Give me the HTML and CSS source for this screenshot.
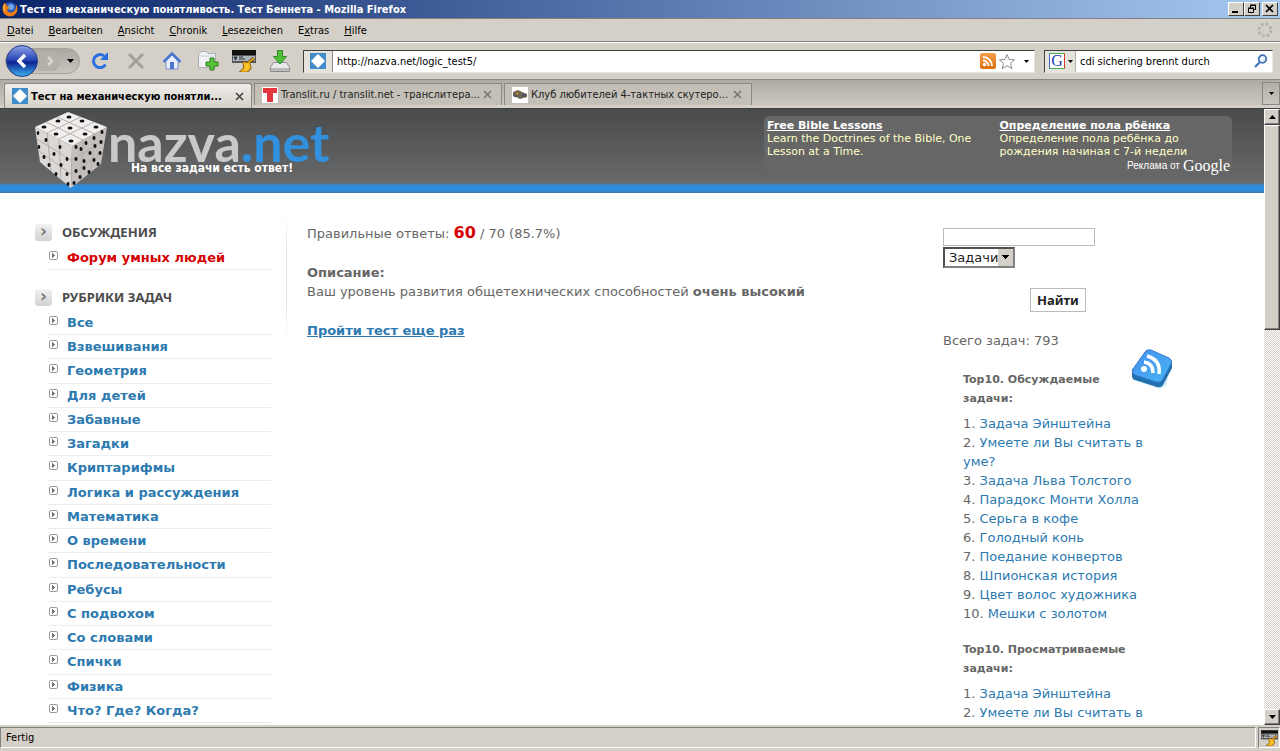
FILE: index.html
```html
<!DOCTYPE html>
<html lang="ru">
<head>
    <meta charset="UTF-8">
    <meta name="viewport" content="width=device-width, initial-scale=1.0">
    <title>Тест на механическую понятливость. Тест Беннета</title>
    <link rel="stylesheet" href="styles.css">
</head>
<body>
    <!-- shared icons -->
    <svg class="defs" width="0" height="0" aria-hidden="true">
        <defs>
            <linearGradient id="orb" x1="0" y1="0" x2="0" y2="1">
                <stop offset="0" stop-color="#8fa4e6"/>
                <stop offset=".45" stop-color="#2a48b8"/>
                <stop offset=".55" stop-color="#0c2590"/>
                <stop offset="1" stop-color="#3fb4f4"/>
            </linearGradient>
            <linearGradient id="rss-blue" x1="0" y1="0" x2="1" y2="1">
                <stop offset="0" stop-color="#4a8ff0"/>
                <stop offset="1" stop-color="#45b4f2"/>
            </linearGradient>
            <linearGradient id="feed-orange" x1="0" y1="0" x2="0" y2="1">
                <stop offset="0" stop-color="#f6a04a"/>
                <stop offset="1" stop-color="#dd6f10"/>
            </linearGradient>
        </defs>
        <symbol id="diamond" viewBox="0 0 16 16">
            <rect width="16" height="16" fill="#418bca"/>
            <path d="M8 1l7 7-7 7-7-7z" fill="#fff"/>
            <path d="M8 3l5 5-5 5-5-5z" fill="#fff" stroke="#fff" stroke-width="2" stroke-linejoin="round"/>
        </symbol>
        <symbol id="cross" viewBox="0 0 9 9">
            <path d="M1 1l7 7M8 1L1 8" stroke="currentColor" stroke-width="1.6"/>
        </symbol>
        <symbol id="key" viewBox="0 0 24 22">
            <path d="M0 0h24v5H0z" fill="#111"/>
            <path d="M0 5h24v8H0z" fill="#555"/>
            <path d="M1 6h22v5H1z" fill="#a9b4bd"/>
            <path d="M2 7h3l-1.500 3zM7 7h4M7 9h6" stroke="#333" fill="#333"/>
            <path d="M22 8l-7 6M12 13l5 1 1 4-3 3-5 0 3-3z" stroke="#6b4a00" stroke-width="3" fill="#6b4a00"/>
            <path d="M22 8l-7 6M12 13l5 1 1 4-3 3-5 0 3-3z" stroke="#f5b422" stroke-width="1.600" fill="#f9c62c"/>
        </symbol>
    </svg>

    <div class="window">
        <div class="titlebar">
            <svg width="16" height="16" viewBox="0 0 16 16">
                <circle cx="8" cy="8" r="7" fill="#2c55b5"/>
                <circle cx="9" cy="6" r="3" fill="#6fa8e8"/>
                <path d="M2 2C0 6 0 11 3 13.500c4 3.500 10 2 12-3 1-3 0-6-1-7 .5 4-1 7-4 8-3 .5-5-1-4.500-3.500L8 7 5 5 4 3z" fill="#ee7a12"/>
                <path d="M3 3c-1 3-1 6 1 8-2-1-3-3-3-5z" fill="#ffd24a"/>
            </svg>
            <span class="title-text">Тест на механическую понятливость. Тест Беннета - Mozilla Firefox</span>
            <div class="window-buttons">
                <button class="win-btn" aria-label="Minimieren"><svg width="10" height="10" viewBox="0 0 10 10"><path d="M1 8h6" stroke="#000" stroke-width="2"/></svg></button>
                <button class="win-btn" aria-label="Wiederherstellen"><svg width="10" height="10" viewBox="0 0 10 10"><path d="M3.500 4V1.500h5v4H7M3 1h6M1.500 4.500h5v4h-5zM1 4h6" fill="none" stroke="#000"/></svg></button>
                <button class="win-btn close" aria-label="Schließen"><svg width="10" height="10" viewBox="0 0 10 10"><path d="M1 1l7 7M8 1L1 8" stroke="#000" stroke-width="1.700"/></svg></button>
            </div>
        </div>

        <nav class="menubar">
            <button><u>D</u>atei</button>
            <button><u>B</u>earbeiten</button>
            <button><u>A</u>nsicht</button>
            <button><u>C</u>hronik</button>
            <button><u>L</u>esezeichen</button>
            <button>E<u>x</u>tras</button>
            <button><u>H</u>ilfe</button>
            <svg class="throbber" width="16" height="16" viewBox="0 0 16 16"><circle cx="8" cy="8" r="6" fill="none" stroke="#b5b3ae" stroke-width="3" stroke-dasharray="2.700 2"/></svg>
        </nav>

        <div class="toolbar">
            <div class="history">
                <button class="back" aria-label="Zurück">
                    <svg width="32" height="32" viewBox="0 0 32 32"><circle cx="16" cy="16" r="15.500" fill="url(#orb)" stroke="#253c8c"/><path d="M19 10l-6 6 6 6" fill="none" stroke="#fff" stroke-width="3.500"/></svg>
                </button>
                <button class="forward" aria-label="Vor">
                    <svg width="24" height="20" viewBox="0 0 24 20"><path d="M0 0h18l6 10-6 10H0z" fill="#b4b1ab"/><path d="M10 6l4 4-4 4" fill="none" stroke="#d8d5ce" stroke-width="2.500"/></svg>
                </button>
                <button class="drop" aria-label="Verlauf"><svg width="7" height="4" viewBox="0 0 7 4"><path d="M0 0h7L3.500 4z"/></svg></button>
            </div>
            <button class="tool" aria-label="Neu laden">
                <svg width="20" height="20" viewBox="0 0 20 20"><path d="M15.500 13.500A6.500 6.500 0 1 1 14 5" fill="none" stroke="#2a6fdf" stroke-width="3"/><path d="M18 1v8h-8z" fill="#2a6fdf"/></svg>
            </button>
            <button class="tool" aria-label="Stopp">
                <svg width="20" height="20" viewBox="0 0 20 20"><path d="M3 3l14 14M17 3L3 17" stroke="#a3a09a" stroke-width="3"/></svg>
            </button>
            <button class="tool" aria-label="Startseite">
                <svg width="20" height="20" viewBox="0 0 20 20"><path d="M4 10v8h12v-8l-6-6z" fill="#e8eefb" stroke="#7690c8"/><path d="M1.500 11L10 2.500l8.500 8.500" fill="none" stroke="#4a78cf" stroke-width="2.500"/><path d="M8 11h4v7H8z" fill="#4a78cf"/></svg>
            </button>
            <button class="tool" aria-label="Neuer Tab">
                <svg width="22" height="22" viewBox="0 0 22 22"><path d="M1.500 17.500V4.500L4 1.500h5l2 2h7.500v14z" fill="#f1f3f7" stroke="#a9adb5"/><path d="M2 6h16" stroke="#cdd2da"/><path d="M13 8h4v4h4v4h-4v4h-4v-4H9v-4h4z" fill="#5cc43c" stroke="#2b7d1c"/></svg>
            </button>
            <button class="tool" aria-label="Passwort"><svg width="24" height="22"><use href="#key"/></svg></button>
            <button class="tool" aria-label="Downloads">
                <svg width="20" height="22" viewBox="0 0 20 22"><path d="M3.500 12.500h13l3 5v4H.5v-4z" fill="#e9e9e9" stroke="#8b8b8b"/><path d="M1 18h18v3H1z" fill="#b9b9b9"/><path d="M7.500.5h5v6h4L10 14 3.500 6.500h4z" fill="#4fbf38" stroke="#2f8a22"/></svg>
            </button>
            <div class="field address">
                <span class="site-icon"><svg width="16" height="16"><use href="#diamond"/></svg></span>
                <input type="text" aria-label="Adresse" value="http://nazva.net/logic_test5/">
                <svg width="16" height="16" viewBox="0 0 16 16"><rect width="16" height="16" rx="2" fill="url(#feed-orange)"/><circle cx="4.500" cy="11.500" r="1.700" fill="#fff"/><path d="M3 7.500a5.500 5.500 0 0 1 5.500 5.500M3 4a9 9 0 0 1 9 9" fill="none" stroke="#fff" stroke-width="1.800"/></svg>
                <svg width="18" height="17" viewBox="0 0 18 17"><path d="M9 1.500l2.200 5 5.300.4-4 3.500 1.300 5.200L9 12.800l-4.800 2.800 1.300-5.200-4-3.500 5.300-.4z" fill="#fff" stroke="#8b8b8b"/></svg>
                <button class="field-drop" aria-label="Adressliste"><svg width="5" height="3" viewBox="0 0 5 3"><path d="M0 0h5L2.500 3z"/></svg></button>
            </div>
            <div class="field search">
                <button class="engine" aria-label="Suchmaschine">
                    <span class="engine-logo">G</span>
                    <svg width="5" height="3" viewBox="0 0 5 3"><path d="M0 0h5L2.500 3z"/></svg>
                </button>
                <input type="text" aria-label="Suche" value="cdi sichering brennt durch">
                <svg width="14" height="14" viewBox="0 0 14 14"><circle cx="8.500" cy="5" r="3.800" fill="#eaf2fb" stroke="#3f73b5" stroke-width="1.800"/><path d="M6 8l-5 5" stroke="#3f73b5" stroke-width="2.200"/></svg>
            </div>
        </div>

        <div class="tabs">
            <div class="tab active">
                <svg width="16" height="16"><use href="#diamond"/></svg>
                <span>Тест на механическую понятли...</span>
                <button aria-label="Tab schließen"><svg width="9" height="9"><use href="#cross"/></svg></button>
            </div>
            <div class="tab">
                <svg width="16" height="16" viewBox="0 0 16 16"><rect width="16" height="16" fill="#fff"/><path d="M1 1h14v5h-4v9H5V6H1z" fill="#e2373f"/></svg>
                <span>Translit.ru / translit.net - транслитера...</span>
                <button aria-label="Tab schließen"><svg width="9" height="9"><use href="#cross"/></svg></button>
            </div>
            <div class="tab">
                <svg width="16" height="16" viewBox="0 0 16 16"><rect width="16" height="16" fill="#fff"/><path d="M1 5l5-2 4 2 5 2v3l-4 1-3 1-4-2-3-1z" fill="#6e6250"/><path d="M4 5l3 1-2 2z" fill="#d49a2a"/><path d="M10 7l4 1-3 2zM2 8l3 2-3 0z" fill="#3c4a78"/></svg>
                <span>Клуб любителей 4-тактных скутеро...</span>
                <button aria-label="Tab schließen"><svg width="9" height="9"><use href="#cross"/></svg></button>
            </div>
            <button class="all-tabs" aria-label="Alle Tabs"><svg width="5" height="3" viewBox="0 0 5 3"><path d="M0 0h5L2.500 3z"/></svg></button>
        </div>

        <div class="viewport">
            <div class="page">
                <header class="header">
                    <svg class="cube" width="74" height="80" viewBox="0 0 74 80">
                        <path d="M1 16L34 1l39 15-35 19z" fill="#f1efed"/>
                        <path d="M1 16l37 19-1 42L6 51z" fill="#dcd8d6"/>
                        <path d="M73 16L38 35l-1 42 30-24z" fill="#c4bebc"/>
                        <path d="M12 11l37 18M23 6l38 17M13 22l34-16M25 28l35-17M3 28l34 21M5 40l32 23M13 22l4 38M25 29l2 40M71 29L38 49M69 41L37 63M61 23l-4 38M49 29l-2 40" stroke="#b5afad" fill="none"/>
                        <g class="pips">
                            <ellipse cx="35" cy="6" rx="2.500" ry="1.500"/><ellipse cx="24" cy="10" rx="2.500" ry="1.500"/><ellipse cx="48" cy="10" rx="2.500" ry="1.500"/>
                            <ellipse cx="10" cy="16" rx="2.500" ry="1.500"/><ellipse cx="36" cy="17" rx="2.500" ry="1.500"/><ellipse cx="62" cy="16" rx="2.500" ry="1.500"/>
                            <ellipse cx="22" cy="23" rx="2.500" ry="1.500"/><ellipse cx="51" cy="23" rx="2.500" ry="1.500"/><ellipse cx="37" cy="30" rx="2.500" ry="1.500"/>
                            <ellipse cx="4" cy="22" rx="1.300" ry="2"/><ellipse cx="12" cy="29" rx="1.500" ry="2"/><ellipse cx="26" cy="36" rx="1.500" ry="2"/><ellipse cx="33" cy="48" rx="1.500" ry="2"/>
                            <ellipse cx="5" cy="36" rx="1.300" ry="2"/><ellipse cx="20" cy="43" rx="1.500" ry="2"/><ellipse cx="10" cy="46" rx="1.500" ry="2"/><ellipse cx="15" cy="54" rx="1.500" ry="2"/>
                            <ellipse cx="27" cy="54" rx="1.500" ry="2"/><ellipse cx="22" cy="63" rx="1.500" ry="2"/><ellipse cx="33" cy="63" rx="1.500" ry="2"/><ellipse cx="34" cy="73" rx="1.500" ry="2"/>
                            <ellipse cx="42" cy="36" rx="1.500" ry="2"/><ellipse cx="42" cy="48" rx="1.500" ry="2"/><ellipse cx="47" cy="38" rx="1.500" ry="2"/><ellipse cx="52" cy="32" rx="1.500" ry="2"/>
                            <ellipse cx="60" cy="27" rx="1.500" ry="2"/><ellipse cx="68" cy="21" rx="1.500" ry="2"/><ellipse cx="67" cy="31" rx="1.500" ry="2"/><ellipse cx="61" cy="35" rx="1.500" ry="2"/>
                            <ellipse cx="56" cy="42" rx="1.500" ry="2"/><ellipse cx="66" cy="42" rx="1.500" ry="2"/><ellipse cx="50" cy="50" rx="1.500" ry="2"/><ellipse cx="60" cy="49" rx="1.500" ry="2"/>
                            <ellipse cx="42" cy="60" rx="1.500" ry="2"/><ellipse cx="50" cy="57" rx="1.500" ry="2"/><ellipse cx="64" cy="53" rx="1.500" ry="2"/><ellipse cx="46" cy="66" rx="1.500" ry="2"/><ellipse cx="55" cy="61" rx="1.500" ry="2"/><ellipse cx="40" cy="72" rx="1.500" ry="2"/>
                        </g>
                    </svg>
                    <div class="logo">
                        <div class="logo-name">nazva<span>.net</span></div>
                        <div class="slogan">На все задачи есть ответ!</div>
                    </div>
                    <div class="ads">
                        <div class="ad">
                            <a href="#">Free Bible Lessons</a>
                            <p>Learn the Doctrines of the Bible, One Lesson at a Time.</p>
                        </div>
                        <div class="ad">
                            <a href="#">Определение пола рбёнка</a>
                            <p>Определение пола ребёнка до рождения начиная с 7-й недели</p>
                        </div>
                        <div class="ads-by">Реклама от <span>Google</span></div>
                    </div>
                </header>

                <div class="columns">
                    <aside class="sidebar">
                        <h2>ОБСУЖДЕНИЯ</h2>
                        <ul class="menu forum">
                            <li><a href="#">Форум умных людей</a></li>
                        </ul>
                        <h2>РУБРИКИ ЗАДАЧ</h2>
                        <ul class="menu rubrics">
                            <li><a href="#">Все</a></li>
                            <li><a href="#">Взвешивания</a></li>
                            <li><a href="#">Геометрия</a></li>
                            <li><a href="#">Для детей</a></li>
                            <li><a href="#">Забавные</a></li>
                            <li><a href="#">Загадки</a></li>
                            <li><a href="#">Криптарифмы</a></li>
                            <li><a href="#">Логика и рассуждения</a></li>
                            <li><a href="#">Математика</a></li>
                            <li><a href="#">О времени</a></li>
                            <li><a href="#">Последовательности</a></li>
                            <li><a href="#">Ребусы</a></li>
                            <li><a href="#">С подвохом</a></li>
                            <li><a href="#">Со словами</a></li>
                            <li><a href="#">Спички</a></li>
                            <li><a href="#">Физика</a></li>
                            <li><a href="#">Что? Где? Когда?</a></li>
                        </ul>
                    </aside>

                    <main class="content">
                        <p>Правильные ответы: <b class="score">60</b> / 70 (85.7%)</p>
                        <p><b>Описание:</b><br>Ваш уровень развития общетехнических способностей <b>очень высокий</b></p>
                        <p><a href="#">Пройти тест еще раз</a></p>
                    </main>

                    <aside class="right">
                        <form class="find">
                            <input type="text" aria-label="Поиск">
                            <select aria-label="Раздел"><option>Задачи</option></select>
                            <button type="button">Найти</button>
                        </form>
                        <p class="total">Всего задач: 793</p>
                        <div class="top">
                            <svg class="rss" width="42" height="42" viewBox="0 0 42 42">
                                <path d="M2 31l12-20 26 4-5 22-6 3z" fill="#d3eafb"/>
                                <path d="M1 20v7q0 3 3 4l22 7q4 1 6-2l9-17v-7z" fill="#1d6fae"/>
                                <path d="M14 3q2-3 6-2l18 8q4 2 2 6l-8 15q-2 4-7 3L4 26q-4-2-2-6z" fill="url(#rss-blue)" stroke="#3678cf"/>
                                <circle cx="13" cy="20" r="3" fill="#fff"/>
                                <path d="M13 13q9 1 9 11M16 7q14 4 12 18" fill="none" stroke="#fff" stroke-width="3.500"/>
                            </svg>
                            <h3>Top10. Обсуждаемые задачи:</h3>
                            <ol>
                                <li><a href="#">Задача Эйнштейна</a></li>
                                <li><a href="#">Умеете ли Вы считать в уме?</a></li>
                                <li><a href="#">Задача Льва Толстого</a></li>
                                <li><a href="#">Парадокс Монти Холла</a></li>
                                <li><a href="#">Серьга в кофе</a></li>
                                <li><a href="#">Голодный конь</a></li>
                                <li><a href="#">Поедание конвертов</a></li>
                                <li><a href="#">Шпионская история</a></li>
                                <li><a href="#">Цвет волос художника</a></li>
                                <li><a href="#">Мешки с золотом</a></li>
                            </ol>
                            <h3>Top10. Просматриваемые задачи:</h3>
                            <ol>
                                <li><a href="#">Задача Эйнштейна</a></li>
                                <li><a href="#">Умеете ли Вы считать в</a></li>
                            </ol>
                        </div>
                    </aside>
                </div>
            </div>
            <div class="scrollbar">
                <button aria-label="Nach oben"><svg width="7" height="4" viewBox="0 0 7 4"><path d="M0 4h7L3.500 0z"/></svg></button>
                <div class="thumb"></div>
                <div class="track"></div>
                <button aria-label="Nach unten"><svg width="7" height="4" viewBox="0 0 7 4"><path d="M0 0h7L3.500 4z"/></svg></button>
            </div>
        </div>

        <div class="statusbar">
            <div class="status-text">Fertig</div>
            <div class="status-icon"><svg width="17" height="16"><use href="#key"/></svg></div>
        </div>
    </div>
</body>
</html>
```
FILE: styles.css
```css
* {
    box-sizing: border-box;
}
body {
    margin: 0;
    overflow: hidden;
    font-family: "DejaVu Sans Condensed", Tahoma, sans-serif;
    font-size: 11px;
    color: #000;
}
button {
    padding: 0;
    border: none;
    background: none;
    font: inherit;
    color: inherit;
}
.defs {
    position: absolute;
}
.window {
    display: flex;
    flex-direction: column;
    height: 100vh;
    background: #d4d0c8;
}

/* title bar */
.titlebar {
    display: flex;
    align-items: center;
    height: 18px;
    padding: 0 2px;
    background: linear-gradient(90deg, #0a246a, #a6caf0);
    color: #fff;
    font-weight: bold;
}
.title-text {
    flex: 1;
    margin-left: 2px;
    white-space: nowrap;
}
.window-buttons {
    display: flex;
}
.win-btn {
    display: flex;
    align-items: center;
    justify-content: center;
    width: 16px;
    height: 14px;
    background: #d4d0c8;
    border: 1px solid;
    border-color: #fff #404040 #404040 #fff;
}
.win-btn.close {
    margin-left: 2px;
}

/* menu */
.menubar {
    display: flex;
    align-items: center;
    gap: 15px;
    height: 24px;
    padding: 0 7px;
    border-top: 1px solid #808080;
    border-bottom: 1px solid #808080;
}
.throbber {
    margin-left: auto;
}

/* navigation toolbar */
.toolbar {
    display: flex;
    align-items: center;
    height: 38px;
    padding: 0 7px 0 5px;
    border-top: 1px solid #fff;
    border-bottom: 1px solid #8b8883;
}
.history {
    display: flex;
    align-items: center;
    height: 26px;
    width: 75px;
    margin-right: 2px;
    background: linear-gradient(#aaa7a1, #c9c5bd);
    border: 1px solid #a5a29b;
    border-radius: 13px;
}
.history button {
    display: flex;
}
.drop {
    margin-left: 5px;
}
.tool {
    display: flex;
    align-items: center;
    justify-content: center;
    width: 36px;
    height: 32px;
}
.field {
    display: flex;
    align-items: center;
    height: 23px;
    background: #fff;
    border: 1px solid;
    border-color: #404040 #e8e6e0 #e8e6e0 #404040;
}
.field input {
    flex: 1;
    min-width: 0;
    padding: 0 4px;
    border: none;
    outline: none;
    font: inherit;
}
.address {
    flex: 1;
    margin-left: 5px;
    gap: 2px;
}
.site-icon {
    display: flex;
    align-items: center;
    justify-content: center;
    align-self: stretch;
    width: 29px;
    background: #e6e3dd;
    border-right: 1px solid #8b8883;
}
.field.address input {
    padding-left: 2px;
}
.field-drop {
    display: flex;
    align-items: center;
    justify-content: center;
    width: 16px;
    height: 20px;
}
.search {
    width: 229px;
    margin-left: 9px;
    padding-right: 4px;
}
.engine {
    display: flex;
    align-items: center;
    align-self: stretch;
    gap: 3px;
    width: 31px;
    padding-left: 4px;
    background: #e6e3dd;
    border-right: 1px solid #b5b2ab;
}
.engine-logo {
    width: 16px;
    height: 16px;
    background: #fff;
    border: 1px solid;
    border-color: #4cb050 #d9372c #4cb050 #3c64d0;
    color: #1c3fae;
    font: 16px/14px "Liberation Serif", serif;
    text-align: center;
}

/* tabs */
.tabs {
    display: flex;
    align-items: flex-end;
    gap: 2px;
    height: 28px;
    padding: 3px 0 0 4px;
    background: linear-gradient(#aeaba4, #cbc7bf);
    border-bottom: 3px solid #d4d0c8;
}
.tab {
    display: flex;
    align-items: center;
    width: 248px;
    height: 22px;
    padding: 0 9px 0 7px;
    background: #c4c0b8;
    border: 1px solid #8b8883;
    border-bottom: none;
    color: #222;
}
.tab.active {
    height: 25px;
    margin-bottom: -3px;
    padding-right: 7px;
    background: linear-gradient(#f0eeea, #d4d0c8);
    border-radius: 3px 3px 0 0;
    color: #000;
    font-weight: bold;
}
.tab span {
    flex: 1;
    margin-left: 3px;
    white-space: nowrap;
}
.tab button {
    display: flex;
    color: #777;
}
.tab.active button {
    color: #444;
}
.all-tabs {
    display: flex;
    align-items: center;
    justify-content: center;
    width: 18px;
    height: 23px;
    margin-left: auto;
    border: 1px solid #8b8883;
}

/* viewport */
.viewport {
    display: flex;
    flex: 1;
    min-height: 0;
    border-top: 1px solid #404040;
    background: #fff;
}
.page {
    flex: 1;
    min-width: 0;
    overflow: hidden;
    font-family: "DejaVu Sans", Verdana, sans-serif;
    font-size: 13px;
    line-height: 19px;
    color: #666;
}
.page a {
    color: #2d7ab0;
}
.header {
    display: flex;
    align-items: flex-start;
    height: 84px;
    padding: 2px 32px 0 34px;
    background: linear-gradient(#4a4b4c, #68696a 74px, #4478a6 75px, #2d8cdc 77px, #2d8cdc 81px, #4478a6);
}
.cube {
    flex: none;
}
.pips {
    fill: #111;
}
.logo {
    flex: 1;
}
.logo-name {
    height: 50px;
    color: #c8c9ca;
    font: bold 52px/62px Lato, sans-serif;
}
.logo-name span {
    color: #3191df;
}
.slogan {
    padding-left: 23px;
    color: #fff;
    font: bold 12px/14px "DejaVu Sans Condensed", sans-serif;
}
.ads {
    display: grid;
    grid-template-columns: 1fr 1fr;
    width: 468px;
    margin-top: 5px;
    padding: 3px 0 0 3px;
    background: #666;
    border-radius: 5px;
    font-size: 11px;
    line-height: 13px;
}
.ads a {
    color: #fff;
    font-weight: bold;
}
.ad p {
    width: 222px;
    margin: 0;
    color: #ffffc8;
}
.ads-by {
    display: flex;
    grid-column: 1 / 3;
    align-items: center;
    justify-content: flex-end;
    gap: 3px;
    padding-right: 2px;
    color: #fff;
    font: 10px/16px "Liberation Sans", sans-serif;
}
.ads-by span {
    font: 16px/16px "Liberation Serif", serif;
}
.columns {
    display: flex;
}

/* left menu */
.sidebar {
    width: 287px;
    padding: 29px 16px 0 35px;
    background: linear-gradient(#fff, #e4e4e4 40px, #e4e4e4 90px, #fff) no-repeat 286px 20px / 1px 127px;
}
.sidebar h2 {
    display: flex;
    align-items: center;
    height: 21px;
    margin: 0 0 3px;
    color: #4c4c4c;
    font: bold 13px/21px "Noto Sans", sans-serif;
}
.sidebar h2::before {
    content: "›";
    width: 17px;
    height: 17px;
    margin-right: 10px;
    background: linear-gradient(#f2f2f2, #d2d2d2);
    border-radius: 3px;
    color: #777;
    font: bold 17px/14px "DejaVu Sans", sans-serif;
    text-align: center;
}
.menu {
    display: grid;
    margin: 0 0 17px 13px;
    padding: 0;
    list-style: none;
}
.rubrics {
    min-height: 412px;
}
.menu li {
    display: flex;
    min-height: 24px;
    border-bottom: 1px solid #ececec;
    line-height: 23px;
}
.menu li::before {
    content: "";
    width: 7px;
    height: 7px;
    margin: 5px 9px 0 1px;
    border: 1px solid #999;
    border-radius: 2px;
    background: linear-gradient(#777, #777) no-repeat 2px 1px / 1px 5px, linear-gradient(#777, #777) no-repeat 3px 2px / 1px 3px, linear-gradient(#777, #777) no-repeat 4px 3px / 1px 1px;
}
.menu a {
    font-weight: bold;
    text-decoration: none;
}
.forum a {
    color: #d60000;
}

/* result */
.content {
    flex: 1;
    padding: 31px 0 0 20px;
}
.content p {
    margin: 0 0 20px;
}
.content a {
    font-weight: bold;
}
.score {
    color: #d60000;
    font-size: 16px;
    line-height: 16px;
}

/* right column */
.right {
    width: 321px;
    padding-top: 35px;
}
.find {
    display: flex;
    flex-direction: column;
    align-items: flex-start;
}
.find input {
    width: 152px;
    height: 18px;
    border: 1px solid #bbb;
}
.find select {
    width: 72px;
    height: 21px;
    margin-top: 1px;
    padding: 0 0 0 4px;
    appearance: none;
    border: 2px solid;
    border-color: #505050 #808080 #808080 #505050;
    border-radius: 0;
    background: linear-gradient(#000, #000) no-repeat 57px 6px / 7px 1px, linear-gradient(#000, #000) no-repeat 58px 7px / 5px 1px, linear-gradient(#000, #000) no-repeat 59px 8px / 3px 1px, linear-gradient(#000, #000) no-repeat 60px 9px / 1px 1px, linear-gradient(#d4d0c8, #d4d0c8) no-repeat right / 15px 100%, #fff;
    color: #222;
    font: 13px "DejaVu Sans", sans-serif;
}
.find button {
    height: 24px;
    margin: 20px 0 0 87px;
    padding: 0 6px;
    border: 1px solid #bbb;
    background: #fff;
    color: #222;
    font: bold 13px "Noto Sans", sans-serif;
}
.total {
    margin: 19px 0 20px;
}
.top {
    position: relative;
    width: 210px;
    padding-left: 20px;
}
.rss {
    position: absolute;
    top: -21px;
    left: 188px;
}
.top h3 {
    margin: 0 0 6px;
    font-size: 11px;
    line-height: 19px;
}
.top ol {
    margin: 0 0 17px;
    padding: 0;
    list-style-position: inside;
    counter-reset: item;
}
.top li {
    display: block;
    counter-increment: item;
}
.top li::before {
    content: counter(item) ". ";
}
.top a {
    text-decoration: none;
}

/* scroll bar */
.scrollbar {
    display: flex;
    flex-direction: column;
    width: 16px;
}
.scrollbar button,
.thumb {
    display: flex;
    align-items: center;
    justify-content: center;
    height: 16px;
    background: #d4d0c8;
    border: 1px solid;
    border-color: #fff #404040 #404040 #fff;
    box-shadow: inset -1px -1px #808080;
}
.scrollbar .thumb {
    height: 205px;
}
.track {
    flex: 1;
    background: repeating-conic-gradient(#d4d0c8 0 25%, #fff 0 50%) 0 0 / 2px 2px;
}

/* status bar */
.statusbar {
    display: flex;
    gap: 2px;
    height: 26px;
    padding: 2px 0 3px;
}
.status-text {
    flex: 1;
    padding-left: 5px;
    border: 1px solid;
    border-color: #808080 #fff #fff #808080;
    line-height: 19px;
}
.status-icon {
    display: flex;
    align-items: center;
    justify-content: center;
    width: 22px;
    border: 1px solid;
    border-color: #808080 #fff #fff #808080;
}
```
